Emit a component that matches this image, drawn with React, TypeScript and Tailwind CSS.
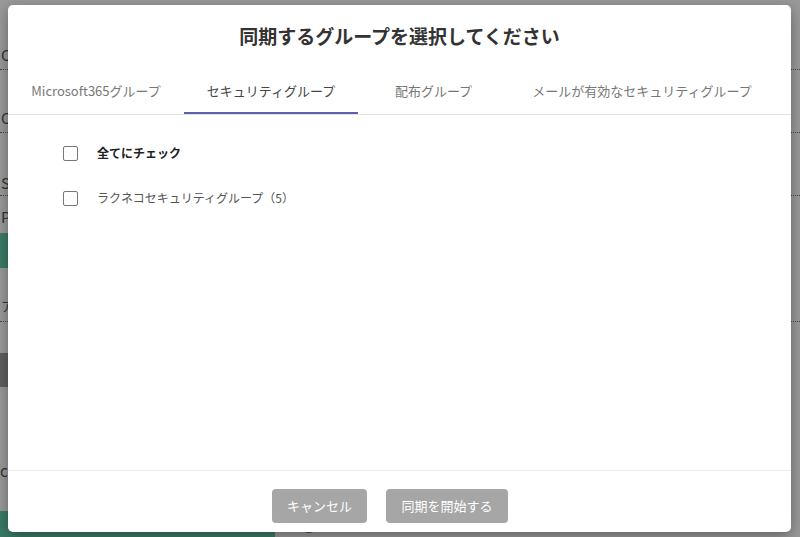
import React from "react";

const jp = { fontFamily: '"Noto Sans CJK JP", "Noto Sans", sans-serif' };

const tabs = [
  { label: "Microsoft365グループ", w: "w-[176px]", active: false },
  { label: "セキュリティグループ", w: "w-[174px]", active: true },
  { label: "配布グループ", w: "w-[151px]", active: false },
  { label: "メールが有効なセキュリティグループ", w: "w-[266px]", active: false },
];

function Checkbox() {
  return <span className="block h-[15px] w-[15px] shrink-0 rounded-[2px] border-[1.5px] border-[#777] bg-white" />;
}

export default function App() {
  return (
    <div className="relative h-[537px] w-[800px] overflow-hidden bg-white text-[15px] text-[#555]" style={jp}>
      {/* background page */}
      <div className="flex flex-col">
        <div className="flex h-[70px] items-end border-b border-dotted border-[#777] pb-[3px] pl-[1px]">Cloud Sync</div>
        <div className="flex h-[63px] items-end border-b border-dotted border-[#777] pb-[3px] pl-[1px]">Client ID</div>
        <div className="flex h-[63px] items-end border-b border-dotted border-[#777] pb-[1px] pl-[1px]">Secret</div>
        <div className="h-[37px] pl-[1px] pt-[12px] leading-[18px]">Provider</div>
        <div className="h-[35px] w-[300px] bg-[#62cbab]" />
        <div className="flex h-[54px] items-end border-b border-dotted border-[#777] pb-[6px] pl-[1px] text-[13px]">アカウント</div>
        <div className="mt-[31px] h-[34px] w-[300px] bg-[#9e9e9e]" />
        <div className="h-[124px] pl-[0px] pt-[75px] leading-[18px]">cron</div>
        <div className="flex h-[26px] items-center">
          <div className="h-full w-[275px] bg-[#62cbab]" />
          <span className="ml-[25px] block h-[18px] w-[18px] rounded-full border-2 border-[#3a7a66]" />
        </div>
      </div>

      {/* overlay */}
      <div className="absolute inset-0 bg-black/40" />

      {/* modal */}
      <div className="absolute left-[8px] top-[5px] flex h-[527px] w-[783px] flex-col rounded-[5px] bg-white shadow-[0_4px_14px_rgba(0,0,0,0.35)]">
        <div className="pt-[18px] text-center text-[19px] font-bold leading-[26px] text-[#333]">
          同期するグループを選択してください
        </div>
        <div className="mt-[17px] flex border-b border-[#e3e3e3]">
          {tabs.map((t) => (
            <div
              key={t.label}
              className={`flex h-[48px] items-center justify-center border-b-2 pt-[4px] text-[13px] leading-[20px] ${t.w} ${
                t.active ? "border-[#5c61a8] text-[#444]" : "border-transparent text-[#777]"
              }`}
            >
              {t.label}
            </div>
          ))}
        </div>
        <div className="flex flex-1 flex-col gap-[21px] pl-[55px] pt-[26px]">
          <div className="flex h-[24px] items-center gap-[19px]">
            <Checkbox />
            <span className="text-[12px] font-bold text-[#222]">全てにチェック</span>
          </div>
          <div className="flex h-[24px] items-center gap-[19px]">
            <Checkbox />
            <span className="text-[12px] text-[#555]">ラクネコセキュリティグループ（5）</span>
          </div>
        </div>
        <div className="flex h-[62px] justify-center gap-[19px] border-t border-[#ececec] pr-[19px] pt-[18px]">
          <button className="h-[34px] w-[95px] rounded-[4px] bg-[#a6a6a6] text-[13px] text-white">キャンセル</button>
          <button className="h-[34px] w-[122px] rounded-[4px] bg-[#a6a6a6] text-[13px] text-white">同期を開始する</button>
        </div>
      </div>
    </div>
  );
}
